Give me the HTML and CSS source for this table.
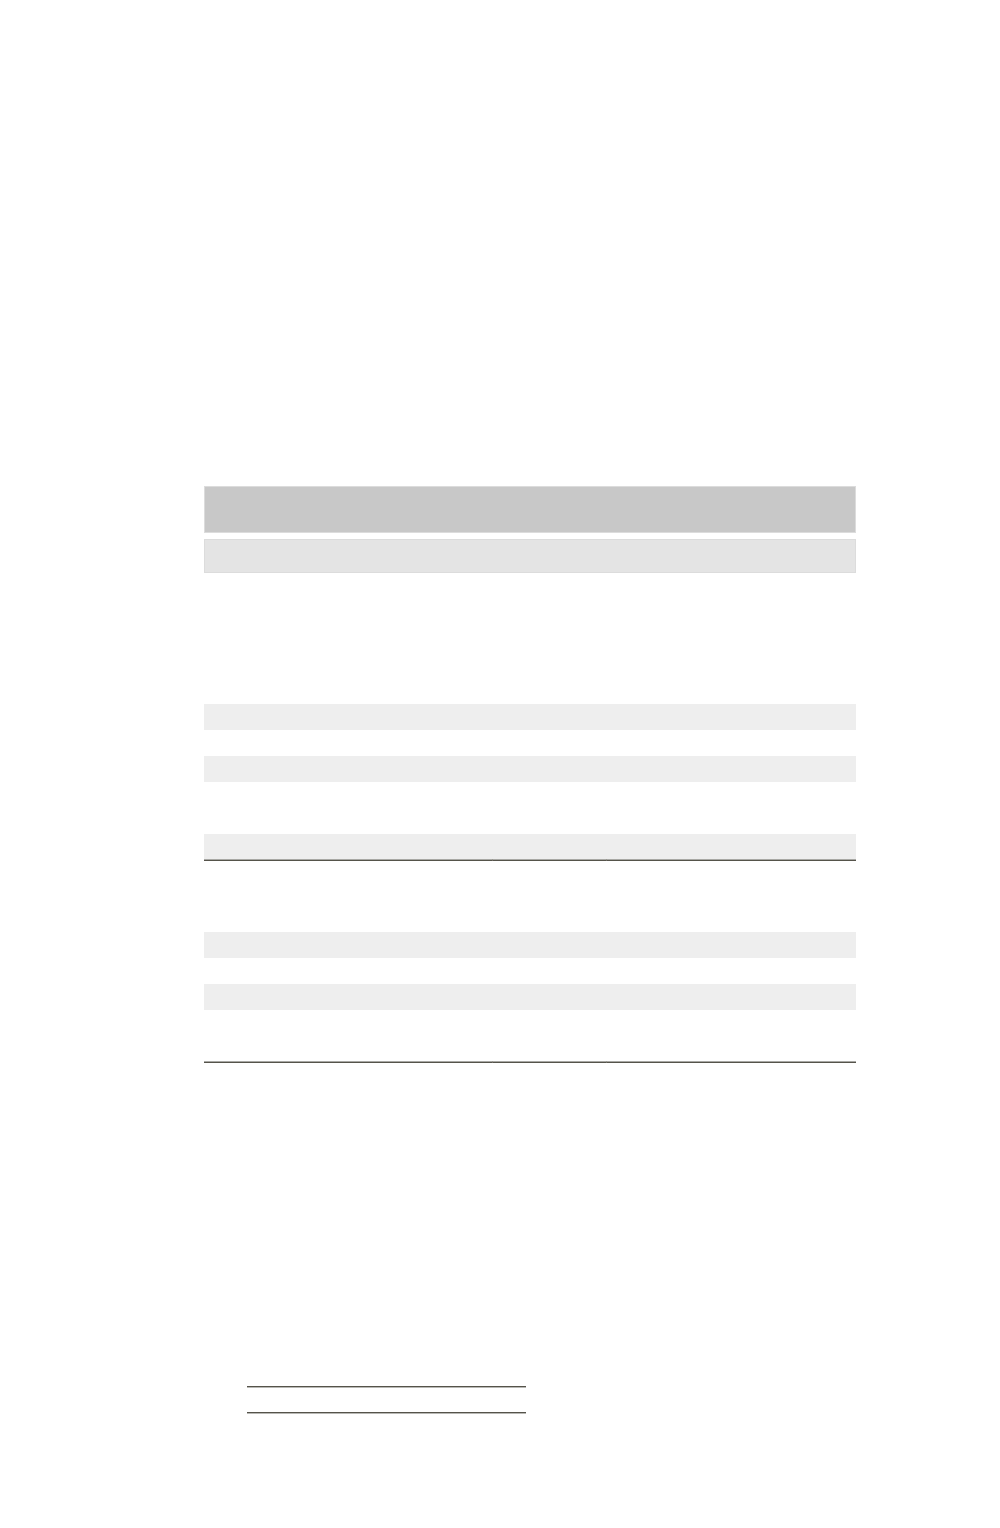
FILE: index.html
```html
<!DOCTYPE html>
<html>
<head>
<meta charset="utf-8">
<link rel="stylesheet" href="styles.css">
</head>
<body>
<div class="page">
  <div class="sheet">
    <div class="head"></div>
    <div class="sub"></div>
    <div class="space s131"></div>
    <div class="row g"></div>
    <div class="row"></div>
    <div class="row g"></div>
    <div class="row tall"></div>
    <div class="row g rule">
      <span class="c1"></span><span class="c2"></span><span class="c3"></span>
    </div>
    <div class="space s72"></div>
    <div class="row g"></div>
    <div class="row"></div>
    <div class="row g"></div>
    <div class="row tail rule">
      <span class="c1"></span><span class="c2"></span><span class="c3"></span>
    </div>
  </div>
  <div class="sign">
    <div class="line"></div>
    <div class="line"></div>
  </div>
</div>
</body>
</html>
```
FILE: styles.css
```css
html, body {
  margin: 0;
  padding: 0;
  background: #ffffff;
  font-family: "Liberation Sans", Arial, sans-serif;
}
.page {
  padding-top: 486px;
  height: 1042px;
}
.sheet {
  margin-left: 204px;
  width: 652px;
  display: flex;
  flex-direction: column;
}
.head {
  height: 45px;
  background: #c8c8c8;
  border: 1px solid #dcdcdc;
}
.sub {
  margin-top: 6px;
  height: 32px;
  background: #e4e4e4;
  border: 1px solid #dcdcdc;
}
.space.s131 { height: 131px; }
.space.s72 { height: 72px; }
.row {
  height: 26px;
  box-sizing: border-box;
}
.row.g { background: #eeeeee; }
.row.tall { height: 52px; }
.row.tail { height: 52px; }
.rule {
  display: flex;
  align-items: flex-end;
}
.rule span {
  height: 2px;
  box-sizing: border-box;
  border-top: 1px solid #a8a8a4;
  border-bottom: 1px solid #55534a;
  margin-bottom: -1px;
}
.rule .c1 { width: 288px; }
.rule .c2 { width: 114px; border-left: 1px solid #8a887f; }
.rule .c3 { flex: 1; border-left: 1px solid #8a887f; }
.sign {
  margin-left: 247px;
  width: 279px;
  margin-top: 324px;
  display: flex;
  flex-direction: column;
  gap: 24px;
}
.line {
  height: 2px;
  box-sizing: border-box;
  border-top: 1px solid #55534a;
  border-bottom: 1px solid #b8b8b4;
}
```
